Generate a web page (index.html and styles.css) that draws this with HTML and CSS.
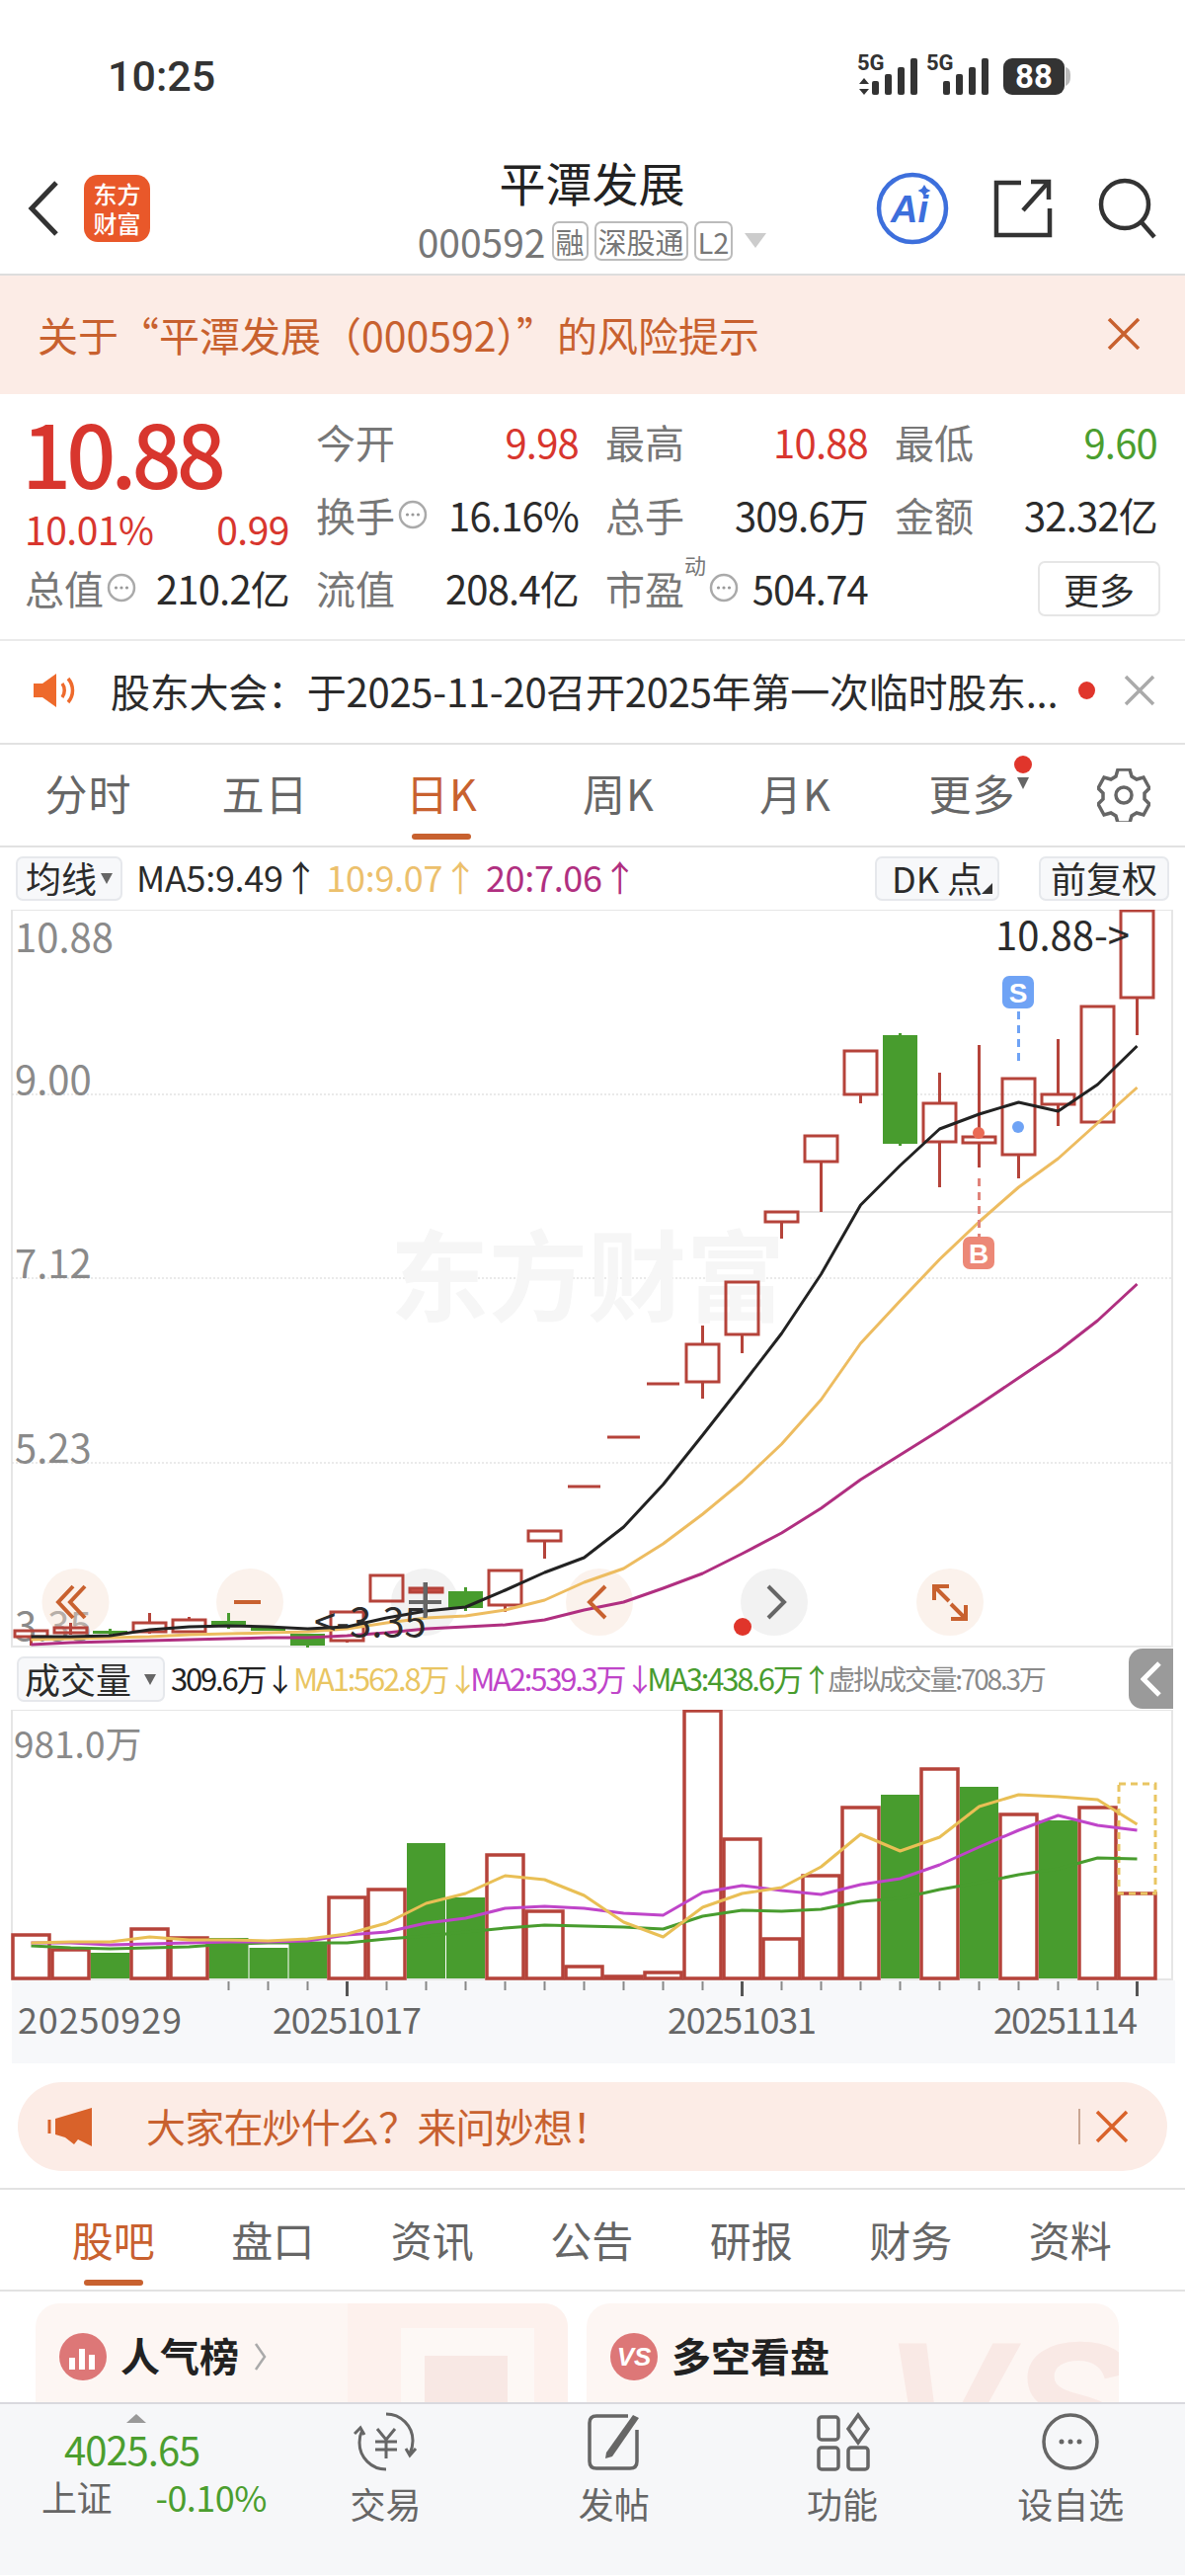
FILE: index.html
```html
<!DOCTYPE html>
<html lang="zh-CN">
<head>
<meta charset="utf-8">
<title>平潭发展</title>
<link rel="stylesheet" href="styles.css">
</head>
<body>
<svg class="defs" width="0" height="0"><defs>
  <g id="more"><circle cx="15" cy="15" r="13" fill="none" stroke="#aaa" stroke-width="2.5"/><circle cx="9.5" cy="15" r="1.6" fill="#999"/><circle cx="15" cy="15" r="1.6" fill="#999"/><circle cx="20.5" cy="15" r="1.6" fill="#999"/></g>
</defs></svg>
<div class="page">
  <div class="status">
    <span class="clock">10:25</span>
    <svg class="status-icons" width="220" height="50" viewBox="865 48 220 50">
      <text class="net" x="868" y="71">5G</text>
      <path class="ink" d="M875 79l5 6h-10zM875 96l5-6h-10z"/>
      <rect class="ink" x="883" y="82" width="7" height="14" rx="2"/><rect class="ink" x="896" y="75" width="7" height="21" rx="2"/><rect class="ink" x="909" y="68" width="7" height="28" rx="2"/><rect class="ink" x="922" y="59" width="7" height="37" rx="2"/>
      <text class="net" x="938" y="71">5G</text>
      <rect class="ink" x="955" y="82" width="7" height="14" rx="2"/><rect class="ink" x="968" y="75" width="7" height="21" rx="2"/><rect class="ink" x="981" y="68" width="7" height="28" rx="2"/><rect class="ink" x="994" y="59" width="7" height="37" rx="2"/>
      <rect class="ink" x="1016" y="59" width="62" height="37" rx="9"/>
      <path d="M1079 68c4 1 5 4 5 9s-1 8-5 10z" fill="#bbb"/>
      <text class="batt" x="1047" y="89">88</text>
    </svg>
  </div>

  <header class="head">
    <div class="head-left">
      <svg width="32" height="56" viewBox="0 0 32 56"><path d="M29 2L4 28l25 26" fill="none" stroke="#333" stroke-width="5"/></svg>
      <div class="logo">东方<br>财富</div>
    </div>
    <div class="head-mid">
      <div class="title">平潭发展</div>
      <div class="sub"><span class="code">000592</span><span class="tag">融</span><span class="tag">深股通</span><span class="tag">L2</span><i class="tri"></i></div>
    </div>
    <div class="head-right">
      <svg width="74" height="74" viewBox="0 0 74 74"><circle cx="37" cy="37" r="34" fill="none" stroke="#3d6fdc" stroke-width="4.5"/><text class="ai" x="15" y="51">Ai</text><path d="M49 13l2.500 4 4 2-4 2-2.500 4-2.500-4-4-2 4-2z" fill="#3d6fdc"/></svg>
      <svg width="60" height="60" viewBox="0 0 60 60"><path d="M28 4H3v53h54V30M30 32L56 3M38 3h18v18" fill="none" stroke="#333" stroke-width="4.5"/></svg>
      <svg width="60" height="62" viewBox="0 0 60 62"><circle cx="28" cy="27" r="24" fill="none" stroke="#333" stroke-width="4.5"/><path d="M44 44l14 16" stroke="#333" stroke-width="4.5"/></svg>
    </div>
  </header>

  <div class="notice">
    <span>关于“平潭发展（000592）”的风险提示</span>
    <svg width="34" height="32" viewBox="0 0 34 32"><path d="M2 1l30 30M32 1L2 31" stroke="#c8612f" stroke-width="3.5"/></svg>
  </div>

  <section class="quote">
    <div class="price-box">
      <div class="price">10.88</div>
      <div class="change"><span>10.01%</span><span>0.99</span></div>
    </div>
    <div class="cell"><span class="lab">今开</span><span class="red">9.98</span></div>
    <div class="cell"><span class="lab">最高</span><span class="red">10.88</span></div>
    <div class="cell"><span class="lab">最低</span><span class="green">9.60</span></div>
    <div class="cell"><span class="lab lab-i">换手<svg width="30" height="30"><use href="#more"/></svg></span><span>16.16%</span></div>
    <div class="cell"><span class="lab">总手</span><span>309.6万</span></div>
    <div class="cell"><span class="lab">金额</span><span>32.32亿</span></div>
    <div class="cell"><span class="lab lab-i">总值<svg width="30" height="30"><use href="#more"/></svg></span><span>210.2亿</span></div>
    <div class="cell"><span class="lab">流值</span><span>208.4亿</span></div>
    <div class="cell"><span class="lab lab-i">市盈<sup class="dyn">动</sup><svg width="30" height="30"><use href="#more"/></svg></span><span>504.74</span></div>
    <div class="cell cell-end"><span class="more-btn">更多</span></div>
  </section>

  <div class="ticker">
    <svg width="46" height="36" viewBox="0 0 46 36"><path d="M1 11h9L24 1v34L10 25H1z" fill="#ee6a2c"/><path d="M30 11c3 4 3 10 0 14M36 6c6 7 6 17 0 24" fill="none" stroke="#ee6a2c" stroke-width="3.5"/></svg>
    <span class="ticker-text">股东大会：于2025-11-20召开2025年第一次临时股东...</span>
    <i class="dot"></i>
    <svg width="32" height="32" viewBox="0 0 32 32"><path d="M2 2l28 28M30 2L2 30" stroke="#aaa" stroke-width="3.5"/></svg>
  </div>

  <nav class="ktabs">
    <span class="ktab">分时</span><span class="ktab">五日</span><span class="ktab on">日K</span><span class="ktab">周K</span><span class="ktab">月K</span>
    <span class="ktab more-tab">更多<i class="mini-dot"></i><i class="mini-tri"></i></span>
    <svg class="gear" width="54" height="54" viewBox="0 0 54 54"><path d="M21 3h12l2 7 5 3 7-2 6 11-5 5v6l5 5-6 11-7-2-5 3-2 7H21l-2-7-5-3-7 2-6-11 5-5v-6l-5-5 6-11 7 2 5-3z" transform="translate(0 -2)" fill="none" stroke="#666" stroke-width="3.5"/><circle cx="27" cy="27" r="8" fill="none" stroke="#666" stroke-width="3.5"/></svg>
  </nav>

  <div class="ma-row">
    <span class="pill pill-ma"><span class="lift">均线</span><i class="down-tri"></i></span>
    <span class="ma-vals"><span>MA5:9.49↑</span><span class="c-or">10:9.07↑</span><span class="c-pu">20:7.06↑</span></span>
    <span class="pill pill-dk"><span class="lift">DK 点</span><i class="corner"></i></span>
    <span class="pill pill-fq"><span class="lift">前复权</span></span>
  </div>

  <svg class="chart" width="1200" height="748" viewBox="0 921 1200 748">
    <rect class="frame" x="12" y="921" width="1175" height="746"/>
    <path class="grid" d="M12 1108H1187M12 1294H1187M12 1481H1187"/>
    <path class="grid-solid" d="M775 1227H1187"/>
    <text class="wm" x="395" y="1330">东方财富</text>
    <text class="axis" x="15" y="964">10.88</text>
    <text class="axis" x="15" y="1108">9.00</text>
    <text class="axis" x="15" y="1294">7.12</text>
    <text class="axis" x="15" y="1481">5.23</text>
    <text class="axis" x="15" y="1661">3.35</text>

    <circle class="nav-o" cx="76.5" cy="1622" r="34"/><circle class="nav-o" cx="253" cy="1622" r="34"/><circle class="nav-g" cx="430" cy="1622" r="34"/><circle class="nav-o" cx="607" cy="1622" r="34"/><circle class="nav-g" cx="784" cy="1622" r="34"/><circle class="nav-o" cx="962" cy="1622" r="34"/>

    <path class="up" d="M15 1651H48V1657H15ZM31.500 1657V1666M55 1648H88V1653H55ZM71.500 1643V1655M135 1643H168V1652H135ZM151.500 1633V1643M151.500 1652V1654M175 1640H208V1652H175ZM191.500 1637V1640M335 1632H368V1661H335ZM351.500 1661V1663M375 1595H408V1621H375ZM495 1590H528V1625H495ZM511.500 1625V1632M535 1550H568V1560H535ZM551.500 1560V1578M575 1505H608M615 1455H648M655 1401H688M695 1361H728V1399H695ZM711.500 1342V1361M711.500 1399V1416M735 1298H768V1351H735ZM751.500 1351V1370M775 1227H808V1237H775ZM791.500 1237V1254M815 1150H848V1176H815ZM831.500 1176V1227M855 1064H888V1108H855ZM871.500 1108V1117M935 1117H968V1156H935ZM951.500 1086V1117M951.500 1156V1202M975 1151H1008V1157H975ZM991.500 1058V1151M991.500 1157V1182M1015 1092H1048V1169H1015ZM1031.500 1169V1193M1055 1108H1088V1118H1055ZM1071.500 1052V1108M1071.500 1118V1140M1095 1019H1128V1136H1095ZM1135 922H1168V1010H1135ZM1151.500 1010V1048"/>
    <rect class="up-solid" x="415" y="1608" width="33" height="4"/><path class="up" d="M415 1608H448V1612H415Z"/>
    <path class="wick-g" d="M111.500 1649V1657M231.500 1633V1649M311.500 1654V1668M471.500 1607V1631M911.500 1046V1160"/>
    <path class="wick-gr" d="M431.500 1602V1638"/>
    <rect class="dn" x="94" y="1651" width="35" height="3"/><rect class="dn" x="214" y="1641" width="35" height="6"/><rect class="dn" x="254" y="1648" width="35" height="3"/><rect class="dn" x="294" y="1654" width="35" height="12"/><rect class="dn" x="454" y="1611" width="35" height="17"/><rect class="dn" x="894" y="1048" width="35" height="110"/>

    <polyline class="l-pu" points="31.5,1665 71.5,1663 111.5,1662 151.5,1661 191.5,1660 231.5,1659 271.5,1658 311.5,1658 351.5,1656 391.5,1653 431.5,1649 471.5,1647 511.5,1645 551.5,1640 591.5,1630 631.5,1622 671.5,1608 711.5,1593 751.5,1573 791.5,1552 831.5,1527 871.5,1498 911.5,1473 951.5,1448 991.5,1422 1031.5,1395 1071.5,1368 1111.5,1337 1151.5,1300"/>
    <polyline class="l-or" points="31.5,1660 71.5,1659 111.5,1658 151.5,1657 191.5,1655 231.5,1654 271.5,1653 311.5,1652 351.5,1649 391.5,1643 431.5,1638 471.5,1636 511.5,1630 551.5,1620 591.5,1602 631.5,1588 671.5,1563 711.5,1533 751.5,1500 791.5,1462 831.5,1417 871.5,1360 911.5,1317 951.5,1275 991.5,1237 1031.5,1202 1071.5,1173 1111.5,1137 1151.5,1101"/>
    <polyline class="l-bk" points="31.5,1657 71.5,1657 111.5,1656 151.5,1650 191.5,1647 231.5,1646 271.5,1647 311.5,1649 351.5,1647 391.5,1638 431.5,1631 471.5,1627 511.5,1610 551.5,1592 591.5,1577 631.5,1546 671.5,1503 711.5,1453 751.5,1402 791.5,1350 831.5,1290 871.5,1220 911.5,1180 951.5,1143 991.5,1128 1031.5,1116 1071.5,1125 1111.5,1098 1151.5,1059"/>

    <path class="mk-b" d="M991.500 1193V1252"/>
    <circle cx="991" cy="1147" r="6" fill="#ea6a55"/>
    <rect x="975" y="1252" width="32" height="33" rx="7" fill="#ec8877"/><text class="mk-t" x="991" y="1279">B</text>
    <path class="mk-s" d="M1031.500 1024V1080"/>
    <circle cx="1031" cy="1141" r="6" fill="#6fa3f5"/>
    <rect x="1015" y="988" width="32" height="33" rx="7" fill="#6fa3f5"/><text class="mk-t" x="1031" y="1015">S</text>

    <text class="hint" x="1008" y="962">10.88-&gt;</text>
    <text class="hint" x="318" y="1657">&lt;-3.35</text>

    <path class="ic-o" d="M86 1606l-15 16 15 16M74 1606l-15 16 15 16M237 1622h27"/>
    <path class="ic-g" d="M414 1622h33M430.500 1602v36"/>
    <path class="ic-o" d="M613 1606l-16 16 16 16"/>
    <path class="ic-g" d="M778 1606l16 16-16 16"/>
    <path class="ic-o" d="M946 1620v-14h15M946 1606l15 15M978 1625v14h-15M978 1639l-15-15"/>
    <circle cx="752" cy="1647" r="9" fill="#e0352b"/>
  </svg>

  <div class="vol-row">
    <span class="pill pill-vol"><span class="lift">成交量</span><i class="down-tri"></i></span>
    <span class="vol-vals"><span>309.6万↓</span><span class="c-ma1">MA1:562.8万↓</span><span class="c-ma2">MA2:539.3万↓</span><span class="c-ma3">MA3:438.6万↑</span><span class="c-gr">虚拟成交量:708.3万</span></span>
    <span class="fold"><svg width="22" height="36" viewBox="0 0 22 36"><path d="M19 2L3 18l16 16" fill="none" stroke="#fff" stroke-width="5"/></svg></span>
  </div>

  <svg class="vol" width="1200" height="358" viewBox="0 1731 1200 358">
    <rect class="frame" x="12" y="1731" width="1175" height="273"/>
    <rect class="axis-bg" x="12" y="2005" width="1178" height="84"/>
    <text class="axis-v" x="14" y="1780">981.0万</text>
    <g class="dn">
      <rect x="91.500" y="1977" width="40" height="26"/><rect x="211.500" y="1962" width="40" height="41"/><rect x="252.500" y="1972" width="39" height="31"/><rect x="292.500" y="1967" width="39" height="36"/><rect x="412" y="1866" width="39" height="137"/><rect x="452" y="1921" width="39" height="82"/><rect x="892" y="1817" width="39" height="186"/><rect x="972" y="1809" width="39" height="194"/><rect x="1052" y="1843" width="39" height="160"/>
    </g>
    <g class="vb">
      <rect x="13" y="1959" width="37" height="44"/><rect x="53" y="1974" width="37" height="29"/><rect x="133" y="1953" width="37" height="50"/><rect x="173" y="1962" width="37" height="41"/><rect x="333" y="1921" width="37" height="82"/><rect x="373" y="1913" width="37" height="90"/><rect x="493" y="1878" width="37" height="125"/><rect x="533" y="1935" width="37" height="68"/><rect x="573" y="1991" width="37" height="12"/><rect x="613" y="2001" width="37" height="2"/><rect x="653" y="1997" width="37" height="6"/><rect x="693" y="1732" width="37" height="271"/><rect x="733" y="1862" width="37" height="141"/><rect x="773" y="1963" width="37" height="40"/><rect x="813" y="1899" width="37" height="104"/><rect x="853" y="1830" width="37" height="173"/><rect x="933" y="1791" width="37" height="212"/><rect x="1013" y="1837" width="37" height="166"/><rect x="1093" y="1830" width="37" height="173"/><rect x="1133" y="1917" width="37" height="86"/>
    </g>
    <rect class="vb-dash" x="1133" y="1806" width="37" height="111"/>
    <polyline class="v-g" points="31.5,1970 71.5,1972 111.5,1973 151.5,1972 191.5,1971 231.5,1968 271.5,1967 311.5,1967 351.5,1967 391.5,1963 431.5,1960 471.5,1956 511.5,1952 551.5,1949 591.5,1950 631.5,1951 671.5,1953 711.5,1940 751.5,1934 791.5,1935 831.5,1933 871.5,1925 911.5,1922 951.5,1913 991.5,1906 1031.5,1898 1071.5,1892 1111.5,1881 1151.5,1882"/>
    <polyline class="v-m" points="31.5,1967 71.5,1967 111.5,1969 151.5,1968 191.5,1967 231.5,1966 271.5,1966 311.5,1965 351.5,1959 391.5,1956 431.5,1947 471.5,1942 511.5,1932 551.5,1930 591.5,1932 631.5,1937 671.5,1939 711.5,1916 751.5,1909 791.5,1914 831.5,1918 871.5,1908 911.5,1902 951.5,1888 991.5,1870 1031.5,1853 1071.5,1838 1111.5,1848 1151.5,1853"/>
    <polyline class="v-y" points="31.5,1967 71.5,1966 111.5,1966 151.5,1961 191.5,1964 231.5,1964 271.5,1965 311.5,1963 351.5,1958 391.5,1947 431.5,1927 471.5,1917 511.5,1899 551.5,1903 591.5,1919 631.5,1946 671.5,1961 711.5,1931 751.5,1917 791.5,1911 831.5,1890 871.5,1857 911.5,1874 951.5,1860 991.5,1829 1031.5,1817 1071.5,1819 1111.5,1822 1151.5,1847"/>
    <path class="tick" d="M231.500 2006v9M271.500 2006v9M311.500 2006v9M391.500 2006v9M431.500 2006v9M471.500 2006v9M511.500 2006v9M551.500 2006v9M591.500 2006v9M631.500 2006v9M671.500 2006v9M711.500 2006v9M791.500 2006v9M831.500 2006v9M871.500 2006v9M911.500 2006v9M951.500 2006v9M991.500 2006v9M1031.500 2006v9M1071.500 2006v9M1111.500 2006v9"/>
    <path class="tick-m" d="M351.500 2006v15M751.500 2006v15M1151.500 2006v15"/>
    <text class="date" x="18" y="2059" textLength="166">20250929</text>
    <text class="date" x="276" y="2059" textLength="151">20251017</text>
    <text class="date" x="676" y="2059" textLength="151">20251031</text>
    <text class="date" x="1006" y="2059" textLength="146">20251114</text>
  </svg>

  <div class="ask">
    <svg width="46" height="40" viewBox="0 0 46 40"><path d="M8 12L45 1v39l-14-7-4 5-9-7-10-3z" fill="#d9622a"/><path d="M2 13v14" stroke="#d9622a" stroke-width="3"/></svg>
    <span class="ask-text">大家在炒什么？来问妙想！</span>
    <i class="ask-bar"></i>
    <svg width="34" height="34" viewBox="0 0 34 34"><path d="M2 2l30 30M32 2L2 32" stroke="#d9622a" stroke-width="3.500"/></svg>
  </div>

  <nav class="btabs">
    <span class="btab on">股吧</span><span class="btab">盘口</span><span class="btab">资讯</span><span class="btab">公告</span><span class="btab">研报</span><span class="btab">财务</span><span class="btab">资料</span>
  </nav>

  <div class="cards">
    <div class="card">
      <i class="deco d1"></i><i class="deco d2"></i><i class="deco d3"></i>
      <svg class="card-ic" width="48" height="48" viewBox="0 0 48 48"><circle cx="24" cy="24" r="24" fill="#d77"/><path d="M10 37V25h6v12zM20 37V16h6v21zM30 37V22h6v15z" fill="#fff"/></svg>
      <span class="card-t">人气榜</span>
      <svg class="card-chev" width="14" height="30" viewBox="0 0 14 30"><path d="M2 2l9 13-9 13" fill="none" stroke="#aaa" stroke-width="2.500"/></svg>
    </div>
    <div class="card">
      <span class="vs-wm">VS</span>
      <svg class="card-ic" width="48" height="48" viewBox="0 0 48 48"><circle cx="24" cy="24" r="24" fill="#d77"/><text class="vs" x="24" y="33">VS</text></svg>
      <span class="card-t">多空看盘</span>
    </div>
  </div>

  <footer class="bar">
    <div class="index">
      <i class="idx-tri"></i>
      <div class="idx-val">4025.65</div>
      <div class="idx-sub"><span>上证</span><span class="green">-0.10%</span></div>
    </div>
    <div class="act">
      <svg width="66" height="60" viewBox="0 0 66 60"><path d="M33 2a27 27 0 0 1 27 27c0 5-1 9-3 13M33 58A27 27 0 0 1 6 31c0-5 1-9 3-13M1 22l6-6 4 7M63 37l-6 7-4-7" fill="none" stroke="#666" stroke-width="3"/><path d="M24 17l9 11 9-11M22 30h22M22 38h22M33 28v19" fill="none" stroke="#666" stroke-width="3"/></svg>
      <span>交易</span>
    </div>
    <div class="act">
      <svg width="60" height="60" viewBox="0 0 60 60"><path d="M44 4H12Q5 4 5 11v39q0 7 7 7h34q7 0 7-7V18" fill="none" stroke="#666" stroke-width="3.500"/><path d="M22 41L49 3l6 3-27 39-7 2z" fill="#666"/></svg>
      <span>发帖</span>
    </div>
    <div class="act">
      <svg width="60" height="60" viewBox="0 0 60 60"><rect x="6" y="5" width="20" height="23" rx="3" fill="none" stroke="#666" stroke-width="3.500"/><rect x="6" y="36" width="20" height="22" rx="3" fill="none" stroke="#666" stroke-width="3.500"/><rect x="36" y="36" width="20" height="22" rx="3" fill="none" stroke="#666" stroke-width="3.500"/><path d="M46 3l10 14-10 14-10-14z" fill="none" stroke="#666" stroke-width="3.500"/></svg>
      <span>功能</span>
    </div>
    <div class="act">
      <svg width="60" height="60" viewBox="0 0 60 60"><circle cx="30" cy="30" r="27" fill="none" stroke="#666" stroke-width="3.500"/><circle cx="21" cy="30" r="2.500" fill="#666"/><circle cx="30" cy="30" r="2.500" fill="#666"/><circle cx="39" cy="30" r="2.500" fill="#666"/></svg>
      <span>设自选</span>
    </div>
  </footer>
</div>
</body>
</html>
```

FILE: styles.css
```css
* { box-sizing: border-box; }
html, body { margin: 0; padding: 0; background: #fff; }
body { font-family: "Noto Sans CJK SC", "Noto Sans", sans-serif; color: #2b2b2b; }
i { display: block; font-style: normal; }
svg { display: block; flex: none; }
.defs { position: absolute; }
.page { width: 1200px; height: 2608px; overflow: hidden; position: relative; }

/* status */
.status { height: 144px; display: flex; justify-content: space-between; padding: 48px 115px 0 109px; }
.clock { font-family: Roboto, sans-serif; font-weight: 500; font-size: 43px; line-height: 46px; color: #333; margin-top: 6px; }
.net { font-family: Roboto, sans-serif; font-weight: 700; font-size: 22px; fill: #333; }
.ink { fill: #333; }
.batt { font-family: Roboto, sans-serif; font-weight: 700; font-size: 33px; fill: #fff; text-anchor: middle; }

/* header */
.head { height: 135px; display: grid; grid-template-columns: 1fr auto 1fr; align-items: center; border-bottom: 2px solid #ddd; padding: 0 29px 0 28px; }
.head-left { display: flex; align-items: center; gap: 25px; }
.logo { width: 67px; height: 68px; border-radius: 14px; background: #e9582a; color: #fff; font-size: 24px; font-weight: 500; line-height: 30px; text-align: center; padding-top: 4px; }
.head-mid { text-align: center; }
.title { font-size: 47px; line-height: 60px; color: #222; margin-top: -2px; }
.sub { display: flex; align-items: center; gap: 6px; margin-top: 8px; height: 44px; color: #777; }
.code { font-size: 39px; line-height: 44px; }
.tag { border: 2px solid #bbb; border-radius: 7px; font-size: 29px; line-height: 36px; padding: 0 2px; height: 40px; color: #777; }
.tri { width: 0; height: 0; margin-left: 6px; border-left: 11px solid transparent; border-right: 11px solid transparent; border-top: 15px solid #ccc; }
.head-right { display: flex; justify-content: flex-end; align-items: center; gap: 45px; }
.ai { font-family: "Liberation Sans", sans-serif; font-weight: 700; font-style: italic; font-size: 38px; fill: #3d6fdc; }

/* notice */
.notice { height: 120px; background: #fcece6; color: #c8612f; font-size: 41px; display: flex; justify-content: space-between; align-items: center; padding: 0 45px 2px 38px; }

/* quote */
.quote { height: 250px; display: grid; grid-template-columns: 268px repeat(3, 266px); grid-auto-rows: 74px; column-gap: 27px; padding: 11px 0 0 25px; border-bottom: 2px solid #eaeaea; font-size: 40px; }
.price-box { grid-row: span 2; }
.price { font-size: 88px; line-height: 88px; font-weight: 500; color: #d8362e; letter-spacing: -5px; margin: 3px 0 0 -3px; }
.change { display: flex; justify-content: space-between; color: #d8362e; font-size: 39px; line-height: 46px; margin-top: 11px; letter-spacing: -.5px; }
.cell { display: flex; justify-content: space-between; align-items: center; letter-spacing: -.8px; color: #2b2b2b; }
.lab { font-size: 40px; color: #777; letter-spacing: 0; }
.lab-i { display: flex; align-items: center; position: relative; }
.lab-i svg { margin-left: 3px; }
.dyn { font-size: 22px; line-height: 22px; align-self: flex-start; margin-top: -6px; color: #777; }
.red { color: #d8362e; }
.green { color: #4b9e2f; }
.cell-end { justify-content: flex-end; grid-column: 4; }
.more-btn { width: 124px; height: 56px; border: 2px solid #e6e6e6; border-radius: 7px; display: flex; align-items: center; justify-content: center; font-size: 36px; letter-spacing: 0; margin-right: -3px; margin-top: 2px; }

/* ticker */
.ticker { height: 105px; display: flex; align-items: center; padding: 0 30px 4px 33px; border-bottom: 2px solid #e2e2e2; }
.ticker-text { font-size: 40px; letter-spacing: -.25px; margin-left: 33px; width: 958px; white-space: nowrap; }
.dot { width: 18px; height: 18px; border-radius: 50%; background: #e0352b; margin-left: 22px; margin-right: 29px; }

/* k tabs */
.ktabs { height: 104px; display: flex; align-items: center; border-bottom: 2px solid #e2e2e2; padding-bottom: 6px; color: #666; }
.ktab { width: 179px; text-align: center; font-size: 43px; letter-spacing: 1px; position: relative; }
.ktab.on { color: #c8612f; }
.ktab.on::after { content: ""; position: absolute; left: 59px; bottom: -17px; width: 60px; height: 6px; border-radius: 3px; background: #c8612f; }
.mini-dot { position: absolute; right: 29px; top: -6px; width: 18px; height: 18px; border-radius: 50%; background: #e0352b; }
.mini-tri { position: absolute; right: 32px; top: 16px; width: 0; height: 0; border-left: 6px solid transparent; border-right: 6px solid transparent; border-top: 12px solid #666; }
.gear { margin-left: 37px; margin-top: 6px; }

/* ma row */
.ma-row { height: 63px; display: flex; align-items: center; padding: 0 16px; position: relative; font-size: 36px; }
.pill { height: 45px; border: 2px solid #e6e8ec; background: #f7f8fa; border-radius: 7px; display: flex; align-items: center; justify-content: center; font-size: 36px; color: #2b2b2b; position: relative; }
.lift { line-height: 36px; margin-top: -3px; }
.pill-ma { width: 108px; justify-content: flex-start; padding-left: 8px; }
.down-tri { width: 0; height: 0; margin-left: 4px; border-left: 6px solid transparent; border-right: 6px solid transparent; border-top: 11px solid #666; }
.ma-vals { display: flex; gap: 8px; margin-left: 14px; width: 748px; white-space: nowrap; line-height: 36px; margin-top: -5px; letter-spacing: -.3px; }
.c-or { color: #ecc06c; }
.c-pu { color: #b02f80; }
.pill-dk { width: 126px; }
.corner { position: absolute; right: 5px; bottom: 5px; width: 0; height: 0; border-left: 11px solid transparent; border-bottom: 11px solid #333; }
.pill-fq { width: 132px; margin-left: 40px; }

/* chart */
.chart, .vol { font-family: "Noto Sans CJK SC", "Noto Sans", sans-serif; }
.frame { fill: none; stroke: #e6e6e6; stroke-width: 2; }
.grid { stroke: #d5d5d5; stroke-width: 1; stroke-dasharray: 2 2; fill: none; }
.grid-solid { stroke: #ddd; stroke-width: 1.5; fill: none; }
.wm { font-size: 100px; font-weight: 700; fill: #f6f6f6; }
.axis { font-size: 40px; fill: #8a8a8a; }
.axis-v { font-size: 37px; fill: #8a8a8a; }
.up { fill: none; stroke: #b5433a; stroke-width: 3; }
.up-solid { fill: #d2544a; }
.wick-g { stroke: #489c2e; stroke-width: 3; fill: none; }
.wick-gr { stroke: #555; stroke-width: 3; fill: none; }
.dn { fill: #489c2e; }
.l-bk, .l-or, .l-pu { fill: none; stroke-width: 3; stroke-linejoin: round; }
.l-bk { stroke: #222; }
.l-or { stroke: #edbc60; }
.l-pu { stroke: #b02f80; }
.nav-o { fill: rgba(246, 224, 210, .42); }
.nav-g { fill: rgba(225, 225, 225, .42); }
.ic-o { fill: none; stroke: #c8612f; stroke-width: 4; }
.ic-g { fill: none; stroke: #666; stroke-width: 4; }
.mk-b { stroke: #e0837a; stroke-width: 3; stroke-dasharray: 8 6; fill: none; }
.mk-s { stroke: #6fa3f5; stroke-width: 3; stroke-dasharray: 8 6; fill: none; }
.mk-t { font-family: "Liberation Sans", sans-serif; font-size: 28px; font-weight: 700; fill: #fff; text-anchor: middle; }
.hint { font-size: 40px; fill: #2b2b2b; }

/* volume */
.vol-row { height: 62px; display: flex; align-items: center; padding-left: 17px; position: relative; }
.pill-vol { width: 150px; justify-content: flex-start; padding-left: 6px; font-size: 36px; height: 46px; }
.pill-vol .down-tri { margin-left: 13px; }
.vol-vals { display: flex; font-size: 31px; letter-spacing: -2.2px; margin-left: 6px; white-space: nowrap; flex: 1; color: #222; line-height: 36px; margin-top: -2px; }
.c-ma1, .c-ma2, .c-ma3 { margin-right: -6px; }
.c-ma1 { color: #e9c562; }
.c-ma2 { color: #bf45c9; }
.c-ma3 { color: #489c2e; }
.c-gr { color: #8a8a8a; font-size: 28px; margin-left: 4px; }
.fold { position: absolute; right: 12px; top: 0; width: 45px; height: 61px; background: #9a9a9a; border-radius: 14px 0 0 14px; display: flex; align-items: center; justify-content: center; }
.vb rect { fill: none; stroke: #b5433a; stroke-width: 3.5; }
.vb-dash { fill: none; stroke: #e9c562; stroke-width: 3; stroke-dasharray: 7 5; }
.v-y, .v-m, .v-g { fill: none; stroke-width: 3; stroke-linejoin: round; }
.v-y { stroke: #e9bf55; }
.v-m { stroke: #bf45c9; }
.v-g { stroke: #489c2e; }
.axis-bg { fill: #f7f8fa; }
.tick { stroke: #888; stroke-width: 2; }
.tick-m { stroke: #555; stroke-width: 3; }
.date { font-size: 36px; fill: #666; }

/* ask */
.ask { height: 90px; margin: 19px 18px 0; border-radius: 45px; background: #fcece6; display: flex; align-items: center; padding: 0 39px 0 30px; }
.ask-text { font-size: 40px; color: #c8612f; margin-left: 54px; flex: 1; letter-spacing: -.8px; line-height: 44px; margin-top: -3px; }
.ask-bar { width: 2px; height: 36px; background: #c9a693; margin-right: 15px; }

/* bottom tabs */
.btabs { height: 105px; margin-top: 17px; display: flex; align-items: center; padding: 0 0 3px 34px; border-top: 2px solid #e2e2e2; border-bottom: 2px solid #e2e2e2; color: #666; }
.btab { width: 161.5px; text-align: center; font-size: 42px; position: relative; }
.btab.on { color: #c8612f; }
.btab.on::after { content: ""; position: absolute; left: 51px; bottom: -17px; width: 60px; height: 6px; border-radius: 3px; background: #c8612f; }

/* cards */
.cards { height: 112px; overflow: hidden; display: flex; gap: 19px; padding: 12px 0 0 36px; }
.card { width: 539px; height: 170px; border-radius: 24px; background: #fdf6f3; display: flex; align-items: center; align-self: flex-start; padding: 0 0 62px 24px; position: relative; overflow: hidden; }
.card-ic { position: relative; }
.card-chev { position: relative; }
.card-t { font-size: 40px; font-weight: 700; color: #222; margin: -4px 15px 0 14px; line-height: 48px; position: relative; }
.deco { position: absolute; }
.d1 { left: 316px; top: 0; width: 223px; height: 170px; background: #fdf1ed; }
.d2 { left: 370px; top: 25px; width: 135px; height: 145px; background: #fdf8f5; }
.d3 { left: 394px; top: 53px; width: 84px; height: 117px; background: #f8e8e4; }
.vs-wm { position: absolute; left: 300px; top: 10px; font-size: 190px; line-height: 190px; font-weight: 700; font-style: italic; color: #f9e9e5; font-family: "Liberation Sans", sans-serif; }
.vs { font-family: "Liberation Sans", sans-serif; font-weight: 700; font-style: italic; font-size: 26px; fill: #fff; text-anchor: middle; }

/* footer */
.bar { height: 175px; background: #f6f7f9; border-top: 2px solid #d9d9de; display: flex; position: relative; }
.index { width: 275px; position: relative; padding-top: 22px; text-align: center; }
.idx-tri { position: absolute; left: 128px; top: 10px; width: 0; height: 0; border-left: 10px solid transparent; border-right: 10px solid transparent; border-bottom: 9px solid #999; }
.idx-val { width: 275px; text-align: left; padding-left: 65px; font-size: 40px; line-height: 46px; color: #4b9e2f; letter-spacing: -1px; }
.idx-sub { display: flex; justify-content: space-between; padding: 0 5px 0 42px; line-height: 50px; font-size: 36px; color: #666; letter-spacing: -.5px; }
.act { width: 231.5px; display: flex; flex-direction: column; align-items: center; padding-top: 8px; font-size: 36px; color: #666; }
.act span { line-height: 50px; margin-top: 7px; }
```
